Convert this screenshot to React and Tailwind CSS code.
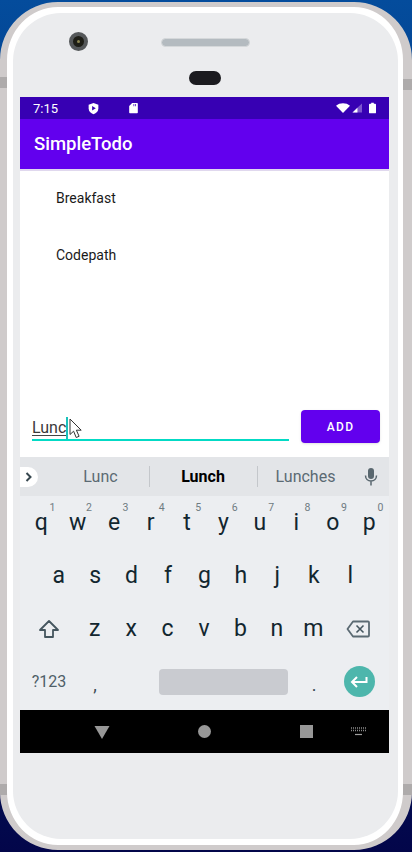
import React from "react";

const rowOne = [["q", "1"], ["w", "2"], ["e", "3"], ["r", "4"], ["t", "5"], ["y", "6"], ["u", "7"], ["i", "8"], ["o", "9"], ["p", "0"]];
const rowTwo = ["a", "s", "d", "f", "g", "h", "j", "k", "l"];
const rowThree = ["z", "x", "c", "v", "b", "n", "m"];

const Key = ({ label, hint }) => (
    <div className="relative flex h-full w-[36.45px] shrink-0 items-center justify-center pb-[1px] text-[23px] leading-none text-[#12262f]">
        {label}
        {hint ? <span className="absolute right-[4px] top-[7px] text-[10.500px] leading-none text-[#6f7b82]">{hint}</span> : null}
    </div>
);

const StatusBar = () => (
    <div className="flex h-[22px] items-center bg-[#3700b3] text-white">
        <span className="ml-[13px] w-[50px] text-[13px] leading-none">7:15</span>
        <svg className="ml-[5px]" width="11" height="13" viewBox="0 0 12 13">
            <path d="M6 .5 11.3 2.4v4c0 3-2.2 5.2-5.3 6.3C2.9 11.6.7 9.400.7 6.400v-4z" fill="#fff" />
            <path d="M4.500 3.800v5l4-2.500z" fill="#3700b3" />
        </svg>
        <svg className="ml-[30px]" width="9" height="12" viewBox="0 0 10 12">
            <path d="M3.500.5H9a.8.8 0 0 1 .8.8v9.700a.8.8 0 0 1-.8.8H1a.8.8 0 0 1-.8-.8V3.800z" fill="#fff" />
            <path d="M5 1.500h.8v2.500H5zM7 1.500h.8v2.500H7z" fill="#3700b3" />
        </svg>
        <svg className="ml-auto" width="14" height="10" viewBox="0 0 14 10">
            <path d="M0 2.700C3.800-.6 10.200-.6 14 2.700L7 10z" fill="#fff" />
        </svg>
        <svg className="ml-[2px]" width="10" height="10" viewBox="0 0 11 10">
            <path d="M11 0v10H0z" fill="#7d55cf" />
            <path d="M6 4.800V10H0.800z" fill="#fff" />
        </svg>
        <svg className="ml-[7px] mr-[13px]" width="7" height="12" viewBox="0 0 8 12">
            <path d="M2.500 0h3v1.200H7a1 1 0 0 1 1 1V11a1 1 0 0 1-1 1H1a1 1 0 0 1-1-1V2.200a1 1 0 0 1 1-1h1.500z" fill="#fff" />
        </svg>
    </div>
);

const TodoList = () => (
    <div className="flex-1 bg-white pl-[36px] pt-[19px] text-[14px] leading-[16px] text-[#1a1a1a]">
        <div className="h-[57px]">Breakfast</div>
        <div>Codepath</div>
    </div>
);

const InputRow = () => (
    <div className="flex h-[47px] items-start bg-white pl-[12px]">
        <div className="relative mr-[12px] flex h-[31px] w-[257px] items-start border-b-2 border-[#03dac5]">
            <span className="mt-[10px] border-b border-[#444] text-[16px] leading-[15px] text-[#3a3a3a]">Lunc</span>
            <span className="mt-[7px] h-[22px] w-[2px] bg-[#19c2bb]" />
            <svg className="absolute left-[37px] top-[8px]" width="14" height="21" viewBox="0 0 14 21">
                <path d="M1 1v15.500l3.600-3.300 2.600 6.300 2.900-1.200-2.700-6.100h4.800z" fill="#fff" stroke="#333" strokeWidth="1" />
            </svg>
        </div>
        <button className="flex h-[33px] w-[79px] items-center justify-center rounded-[4px] bg-[#6200ee] text-[12px] font-medium tracking-[1.300px] text-white shadow-sm">
            ADD
        </button>
    </div>
);

const SuggestionBar = () => (
    <div className="relative flex h-[39px] items-center bg-[#e3e5e8] text-[16px] text-[#5b6a73]">
        <div className="absolute left-0 top-[10px] flex h-[20px] w-[18px] items-center justify-center rounded-r-full bg-white">
            <svg width="8" height="10" viewBox="0 0 8 10">
                <path d="M1.500 1 5.500 5l-4 4" fill="none" stroke="#37474f" strokeWidth="2" />
            </svg>
        </div>
        <div className="ml-[21.500px] flex h-[21px] w-[108px] items-center justify-center border-r border-[#c4c7cb] pl-[11px] pt-[1px]">Lunc</div>
        <div className="flex h-[21px] w-[108px] items-center justify-center border-r border-[#c4c7cb] pt-[1px] font-bold text-black">Lunch</div>
        <div className="flex h-[21px] w-[96px] items-center justify-center pt-[1px]">Lunches</div>
        <svg className="ml-[10px]" width="14" height="18" viewBox="0 0 14 18">
            <rect x="4" y="0" width="6" height="11" rx="3" fill="#59676f" />
            <path d="M1.500 7.500c0 3.300 2.400 5.500 5.500 5.500s5.500-2.200 5.500-5.500M7 13v4.500" fill="none" stroke="#59676f" strokeWidth="1.500" />
        </svg>
    </div>
);

const Keyboard = () => (
    <div className="h-[214px] bg-[#eceef1] px-[3px]">
        <div className="flex h-[53px]">
            {rowOne.map(([label, hint]) => <Key key={label} label={label} hint={hint} />)}
        </div>
        <div className="flex h-[53px] pl-[17.500px]">
            {rowTwo.map(label => <Key key={label} label={label} />)}
        </div>
        <div className="flex h-[53px]">
            <div className="flex w-[53.500px] items-center justify-center pr-[1.500px]">
                <svg width="22" height="20" viewBox="0 0 22 20">
                    <path d="M11 2 2 11h5v7h8v-7h5z" fill="none" stroke="#45565f" strokeWidth="1.800" strokeLinejoin="round" />
                </svg>
            </div>
            {rowThree.map(label => <Key key={label} label={label} />)}
            <div className="flex w-[53.500px] items-center justify-center">
                <svg width="24" height="18" viewBox="0 0 24 18">
                    <path d="M7 1.500h15a1 1 0 0 1 1 1v13a1 1 0 0 1-1 1H7L1.500 9z" fill="none" stroke="#5b6a73" strokeWidth="1.800" strokeLinejoin="round" />
                    <path d="m10.500 5.500 7 7m0-7-7 7" fill="none" stroke="#45565f" strokeWidth="1.600" />
                </svg>
            </div>
        </div>
        <div className="flex h-[53px] items-center">
            <div className="flex w-[53.500px] justify-center pr-[1.500px] text-[16px] text-[#4f5f68]">?123</div>
            <div className="flex w-[37px] justify-center pt-[5px] text-[18px] text-[#3b4a52]">,</div>
            <div className="flex w-[182px] pl-[45px]">
                <div className="h-[26px] w-[129px] rounded-[4px] bg-[#c9cbd0]" />
            </div>
            <div className="flex w-[37px] justify-center pt-[5px] text-[18px] text-[#3b4a52]">.</div>
            <div className="flex w-[53.500px] justify-center">
                <div className="flex h-[31px] w-[31px] items-center justify-center rounded-full bg-[#4db6ac]">
                    <svg width="18" height="14" viewBox="0 0 18 14">
                        <path d="M16.500 2v5H2.500M7 2 2 7l5 5" fill="none" stroke="#fff" strokeWidth="2" />
                    </svg>
                </div>
            </div>
        </div>
    </div>
);

const NavBar = () => (
    <div className="flex h-[43px] items-center bg-black">
        <svg className="ml-[74px]" width="16" height="14" viewBox="0 0 16 14">
            <path d="M.5 1h15L8 14z" fill="#979797" />
        </svg>
        <div className="ml-[88px] h-[13px] w-[13px] rounded-full bg-[#979797]" />
        <div className="ml-[89px] h-[13px] w-[13px] bg-[#979797]" />
        <svg className="ml-[38px]" width="15" height="9" viewBox="0 0 15 9">
            <path d="M0 1h15M0 3.500h15" fill="none" stroke="#8a8a8a" strokeWidth="1.500" strokeDasharray="1 1" />
            <path d="M4 7.500h7" fill="none" stroke="#a0a0a0" strokeWidth="1.200" />
        </svg>
    </div>
);

const Screen = () => (
    <div className="flex h-[656px] w-[369px] flex-col">
        <StatusBar />
        <div className="flex h-[52px] items-center border-b-[2px] border-[#e0d8ee] bg-[#6200ee] pl-[14px] pt-[1px] text-[18.500px] font-medium leading-none text-white">
            SimpleTodo
        </div>
        <TodoList />
        <InputRow />
        <SuggestionBar />
        <Keyboard />
        <NavBar />
    </div>
);

const App = () => (
    <div className="h-[852px] w-[412px] overflow-hidden bg-gradient-to-b from-[#044c9c] to-[#03064a] py-[2px] font-['Roboto',sans-serif]">
        <div className="relative h-[848px] rounded-[58px] border-y-[5px] border-l-[7px] border-r-[9px] border-[#cfcbcb] bg-white py-[6px] pl-[6px] pr-[5px]">
            {/* darker bands in the metal frame */}
            <div className="absolute -left-[7px] top-[70px] h-[11px] w-[7px] bg-[#aeabab]" />
            <div className="absolute -right-[9px] top-[72px] h-[11px] w-[9px] bg-[#aeabab]" />
            <div className="absolute -left-[7px] bottom-[50px] h-[11px] w-[7px] bg-[#aeabab]" />
            <div className="absolute -right-[9px] bottom-[50px] h-[11px] w-[9px] bg-[#aeabab]" />
            <div className="relative h-[826px] rounded-[48px] bg-[#ebecee] pl-[7px] pt-[84px]">
                {/* camera, speaker and sensor on the bezel */}
                <div className="absolute left-[56px] top-[19px] flex h-[19px] w-[19px] items-center justify-center rounded-full border-[4px] border-[#55585a] bg-[#1d1d16]">
                    <div className="h-[3px] w-[3px] rounded-full bg-[#8a8450]" />
                </div>
                <div className="absolute left-[148px] top-[25px] h-[9px] w-[89px] rounded-full border border-[#d5d8da] bg-[#b4bbc0]" />
                <div className="absolute left-[176px] top-[58px] h-[14px] w-[32px] rounded-full bg-[#1b1b1f]" />
                <Screen />
            </div>
        </div>
    </div>
);

export default App;
